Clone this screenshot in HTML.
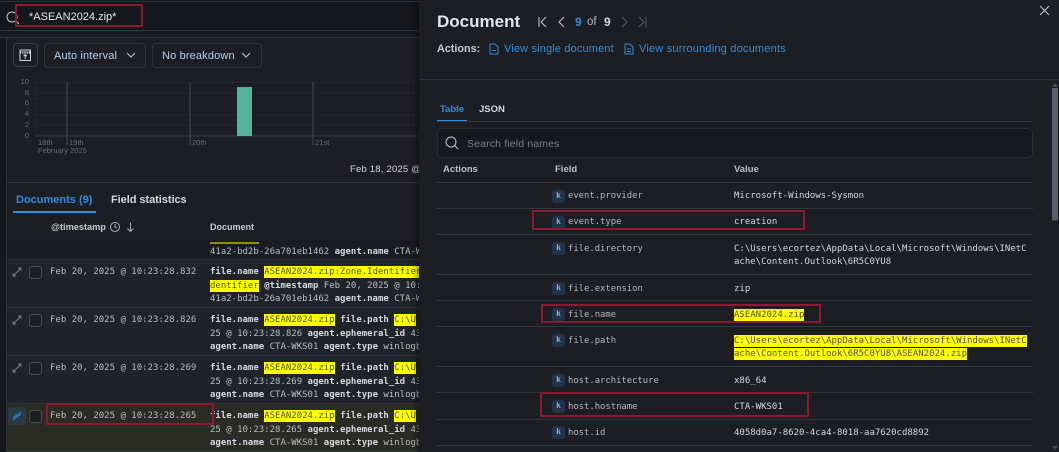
<!DOCTYPE html>
<html><head><meta charset="utf-8">
<style>
html,body{margin:0;padding:0;background:#1d1e24}
#p{position:relative;width:1059px;height:452px;overflow:hidden;background:#1d1e24;font-family:"Liberation Sans",sans-serif;color:#dfe5ef}
#p div,#p span.a,#p svg{position:absolute}
.t{white-space:nowrap;line-height:14px}
.m{font-family:"DejaVu Sans Mono",monospace;font-size:9px;white-space:nowrap;line-height:13px;color:#b9bec6}
.m b{color:#d5d8de;font-weight:bold}
.h{background:#ffff00;color:#55552a;padding:1px 0}
.red{border:2px solid #8c1a32;border-radius:1px;box-sizing:border-box}
.k{width:13px;height:13px;background:#22344a;border-radius:3px;color:#8db4d8;font:bold 8px/13px "Liberation Mono",monospace;text-align:center}
.f{font-family:"DejaVu Sans Mono",monospace;font-size:8.9px;color:#b4b9c1;line-height:13px;white-space:nowrap;margin-top:1px}
.v{font-family:"DejaVu Sans Mono",monospace;font-size:9px;color:#d5d8de;line-height:13.4px;white-space:nowrap;margin-top:1px}
.sep{left:437px;width:596px;height:1px;background:#343741}
.row{left:7px;width:413px;height:47px;background:#21222b;overflow:hidden}
.line{height:1px;background:#32343d}
.cb{width:11px;height:11px;border:1px solid #4a4d57;border-radius:3px;background:#1d1e24;left:29px}
</style></head><body><div id="p">

<!-- left: top bar -->
<div style="left:0;top:0;width:420px;height:30px;background:#16171c"></div>
<div class="line" style="left:0;top:1px;width:420px"></div>
<div class="line" style="left:0;top:30px;width:420px"></div>
<div style="left:0;top:31px;width:420px;height:6px;background:#1a1b20"></div>
<div class="line" style="left:0;top:37px;width:420px"></div>
<div style="left:0;top:38px;width:6px;height:414px;background:#16171c"></div>
<div style="left:6px;top:38px;width:1px;height:414px;background:#30323a"></div>

<svg style="left:6px;top:11px" width="14" height="14" viewBox="0 0 14 14" fill="none" stroke="#c6cbd3" stroke-width="1"><circle cx="6" cy="6" r="5"/><path d="M10 10l3 3"/></svg>
<div class="t" style="left:29px;top:10px;font-size:11px;color:#e6e9ee">*ASEAN2024.zip*</div>
<div class="red" style="left:15px;top:4px;width:128px;height:23px;border-radius:2px"></div>

<!-- chart toolbar -->
<div style="left:13px;top:43px;width:25px;height:24px;border:1px solid #3a3c45;border-radius:4px;box-sizing:border-box"></div>
<svg style="left:19px;top:49px" width="13" height="13" viewBox="0 0 13 13" fill="none" stroke="#d5d8de" stroke-width="1"><rect x="1" y="1" width="10.5" height="10.5"/><path d="M1 3.5h10.5" stroke-width="2.4" stroke-dasharray="1 .8"/><path d="M6.2 10V6M4.6 7.2l1.6-1.6 1.6 1.6"/></svg>
<div style="left:44px;top:43px;width:102px;height:25px;border:1px solid #32343d;border-radius:4px;box-sizing:border-box"></div>
<div class="t" style="left:54px;top:49px;font-size:11px;color:#b5d0ee;letter-spacing:.15px">Auto interval</div>
<svg style="left:126px;top:52px" width="10" height="7" viewBox="0 0 10 7" fill="none" stroke="#c6cbd3"><path d="M1 1l4 4 4-4"/></svg>
<div style="left:152px;top:43px;width:110px;height:25px;border:1px solid #32343d;border-radius:4px;box-sizing:border-box"></div>
<div class="t" style="left:162px;top:49px;font-size:11px;color:#b5d0ee;letter-spacing:.15px">No breakdown</div>
<svg style="left:241px;top:52px" width="10" height="7" viewBox="0 0 10 7" fill="none" stroke="#c6cbd3"><path d="M1 1l4 4 4-4"/></svg>

<!-- chart -->
<svg style="left:0;top:75px" width="420" height="80" viewBox="0 0 420 80">
<g stroke="#2b2d34" stroke-dasharray="2 2"><path d="M36 7h384M36 18h384M36 29h384M36 40h384M36 50h384"/></g>
<path d="M36 61h384" stroke="#383a43"/>
<path d="M36 7v54" stroke="#2b2d34" stroke-dasharray="2 2"/>
<g stroke="#3f4149" stroke-width="1.3"><path d="M67 7v63M190 7v63M313 7v63"/></g>
<rect x="237" y="12" width="15" height="49" fill="#54b399"/>
<g font-family="Liberation Sans" font-size="7.5" fill="#6b6e76" text-anchor="end">
<text x="29" y="9">10</text><text x="29" y="20">8</text><text x="29" y="30">6</text><text x="29" y="41">4</text><text x="29" y="52">2</text><text x="29" y="63">0</text></g>
<g font-family="Liberation Sans" font-size="7.5" fill="#6b6e76">
<text x="38" y="70">18th</text><text x="69" y="70">19th</text><text x="192" y="70">20th</text><text x="315" y="70">21st</text><text x="38" y="78">February 2025</text></g>
</svg>
<div class="t" style="left:350px;top:163px;font-size:9.5px;color:#d5d8de;letter-spacing:.2px">Feb 18, 2025 @ 1</div>
<div class="line" style="left:7px;top:182px;width:413px"></div>

<!-- tabs -->
<div class="t" style="left:16px;top:193px;font-size:11px;font-weight:bold;color:#2f8fdc">Documents (9)</div>
<div class="t" style="left:111px;top:193px;font-size:11px;font-weight:bold;color:#d5d8de;letter-spacing:-.05px">Field statistics</div>
<div style="left:13px;top:211px;width:83px;height:2px;background:#2f8fdc"></div>

<!-- table header -->
<div class="t" style="left:51px;top:220px;font-size:9.2px;font-weight:bold;color:#c6cbd3">@timestamp</div>
<svg style="left:109px;top:221px" width="28" height="12" viewBox="0 0 28 12" fill="none" stroke="#a9adb5"><circle cx="6" cy="6" r="4.5"/><path d="M6 3v3l2 1M21.500 1.500v9M18.500 7.500l3 3 3-3"/></svg>
<div class="t" style="left:210px;top:220px;font-size:9px;font-weight:bold;color:#c6cbd3">Document</div>
<div style="left:7px;top:241px;width:413px;height:1px;background:#17181d"></div>

<!-- partial row -->
<div style="left:7px;top:242px;width:413px;height:17px;background:#1b1c22;overflow:hidden"></div>
<div style="left:210px;top:242px;width:49px;height:2px;background:#8f8f14"></div>
<div class="m" style="left:210px;top:246px"><span>41a2-bd2b-26a701eb1462</span> <b>agent.name</b> CTA-W</div>

<!-- rows -->
<div class="row" style="top:260px"></div>
<div class="line" style="left:7px;top:259px;width:413px"></div>
<div class="line" style="left:7px;top:307px;width:413px"></div>
<div class="row" style="top:308px"></div>
<div class="line" style="left:7px;top:355px;width:413px"></div>
<div class="row" style="top:356px"></div>
<div class="line" style="left:7px;top:403px;width:413px"></div>
<div class="row" style="top:404px;background:#2a2b24"></div>
<div class="line" style="left:7px;top:451px;width:413px"></div>

<!-- expand icons -->
<svg style="left:12px;top:267px" width="10" height="10" viewBox="0 0 10 10" fill="none" stroke="#7d8088" stroke-width=".9"><path d="M1 9L9 1M6 1h3v3M1 6v3h3"/></svg>
<svg style="left:12px;top:315px" width="10" height="10" viewBox="0 0 10 10" fill="none" stroke="#7d8088" stroke-width=".9"><path d="M1 9L9 1M6 1h3v3M1 6v3h3"/></svg>
<svg style="left:12px;top:363px" width="10" height="10" viewBox="0 0 10 10" fill="none" stroke="#7d8088" stroke-width=".9"><path d="M1 9L9 1M6 1h3v3M1 6v3h3"/></svg>
<div style="left:8px;top:407px;width:18px;height:18px;background:#2a3b45;border-radius:3px"></div>
<svg style="left:12px;top:411px" width="10" height="10" viewBox="0 0 10 10" fill="none" stroke="#2f8fdc" stroke-width="1"><path d="M1 9L9 1M4 3v3H1M6 7V4h3"/></svg>

<div class="cb" style="top:266px"></div>
<div class="cb" style="top:314px"></div>
<div class="cb" style="top:362px"></div>
<div class="cb" style="top:410px;background:#1d1e24"></div>

<div class="m" style="left:50px;top:266px">Feb 20, 2025 @ 10:23:28.832</div>
<div class="m" style="left:50px;top:314px">Feb 20, 2025 @ 10:23:28.826</div>
<div class="m" style="left:50px;top:362px">Feb 20, 2025 @ 10:23:28.269</div>
<div class="m" style="left:50px;top:410px">Feb 20, 2025 @ 10:23:28.265</div>

<div class="m" style="left:210px;top:266px"><b>file.name</b> <span class="h">ASEAN2024.zip:Zone.Identifier</span></div>
<div class="m" style="left:210px;top:280px"><span class="h">dentifier</span> <b>@timestamp</b> Feb 20, 2025 @ 10:</div>
<div class="m" style="left:210px;top:293px">41a2-bd2b-26a701eb1462 <b>agent.name</b> CTA-W</div>

<div class="m" style="left:210px;top:314px"><b>file.name</b> <span class="h">ASEAN2024.zip</span> <b>file.path</b> <span class="h">C:\U</span></div>
<div class="m" style="left:210px;top:328px">25 @ 10:23:28.826 <b>agent.ephemeral_id</b> 43</div>
<div class="m" style="left:210px;top:341px"><b>agent.name</b> CTA-WKS01 <b>agent.type</b> winlogb</div>

<div class="m" style="left:210px;top:362px"><b>file.name</b> <span class="h">ASEAN2024.zip</span> <b>file.path</b> <span class="h">C:\U</span></div>
<div class="m" style="left:210px;top:376px">25 @ 10:23:28.269 <b>agent.ephemeral_id</b> 43</div>
<div class="m" style="left:210px;top:389px"><b>agent.name</b> CTA-WKS01 <b>agent.type</b> winlogb</div>

<div class="m" style="left:210px;top:410px"><b>file.name</b> <span class="h">ASEAN2024.zip</span> <b>file.path</b> <span class="h">C:\U</span></div>
<div class="m" style="left:210px;top:424px">25 @ 10:23:28.265 <b>agent.ephemeral_id</b> 43</div>
<div class="m" style="left:210px;top:437px"><b>agent.name</b> CTA-WKS01 <b>agent.type</b> winlogb</div>

<div class="red" style="left:46px;top:403px;width:168px;height:22px"></div>

<!-- right panel -->
<div style="left:419px;top:0;width:640px;height:452px;background:#1d1e24;box-shadow:-3px 0 5px rgba(0,0,0,.35)"></div>
<div class="t" style="left:437px;top:15px;font-size:17px;font-weight:bold;color:#dfe5ef">Document</div>
<svg style="left:537px;top:15px" width="110" height="14" viewBox="0 0 110 14" fill="none" stroke="#c6cbd3" stroke-width="1">
<path d="M2 2v10M9 2L4 7l5 5M27 2l-5 5 5 5"/>
<path d="M85 2l5 5-5 5M102 2l5 5-5 5M109 2v10" stroke="#5a5d66"/></svg>
<div class="t" style="left:575px;top:15px;font-size:12px;font-weight:bold;color:#2f8fdc">9</div>
<div class="t" style="left:587px;top:15px;font-size:11.5px;color:#b5bac2">of</div>
<div class="t" style="left:604px;top:15px;font-size:12px;font-weight:bold;color:#d5d8de">9</div>
<div class="t" style="left:437px;top:42px;font-size:10.8px;font-weight:bold;color:#c6cbd3">Actions:</div>
<svg style="left:489px;top:43px" width="10" height="12" viewBox="0 0 10 12" fill="none" stroke="#2f8fdc"><path d="M1 1h5l3 3v7H1zM3 7.500h4"/></svg>
<div class="t" style="left:504px;top:42px;font-size:11px;color:#2f8fdc;letter-spacing:.15px">View single document</div>
<svg style="left:624px;top:43px" width="10" height="12" viewBox="0 0 10 12" fill="none" stroke="#2f8fdc"><path d="M1 1h5l3 3v7H1zM3 6h4M3 8.500h4"/></svg>
<div class="t" style="left:639px;top:42px;font-size:11px;color:#2f8fdc;letter-spacing:.2px">View surrounding documents</div>
<svg style="left:1038px;top:4px" width="13" height="13" viewBox="0 0 13 13" stroke="#c6cbd3"><path d="M2 2l9 9M11 2l-9 9"/></svg>
<div class="line" style="left:420px;top:79px;width:639px"></div>

<!-- inner tabs -->
<div class="t" style="left:440px;top:103px;font-size:9.5px;font-weight:bold;color:#2f8fdc">Table</div>
<div class="t" style="left:479px;top:103px;font-size:9.5px;font-weight:bold;color:#d5d8de">JSON</div>
<div style="left:437px;top:120px;width:30px;height:2px;background:#2f8fdc"></div>
<div class="sep" style="top:121px"></div>

<div style="left:437px;top:128px;width:596px;height:30px;background:#17181d;border:1px solid #2a2c33;border-radius:5px;box-sizing:border-box"></div>
<svg style="left:445px;top:136px" width="14" height="14" viewBox="0 0 14 14" fill="none" stroke="#c6cbd3"><circle cx="6" cy="6" r="5"/><path d="M10 10l3 3"/></svg>
<div class="t" style="left:467px;top:137px;font-size:10.5px;color:#7d8088;letter-spacing:.15px">Search field names</div>

<div class="t" style="left:443px;top:163px;font-size:9.5px;font-weight:bold;color:#b9c0cb">Actions</div>
<div class="t" style="left:555px;top:163px;font-size:9.5px;font-weight:bold;color:#b9c0cb">Field</div>
<div class="t" style="left:734px;top:163px;font-size:9.5px;font-weight:bold;color:#b9c0cb">Value</div>
<div class="sep" style="top:182px"></div>

<div class="k" style="left:552px;top:190px">k</div><div class="f" style="left:568px;top:189px">event.provider</div>
<div class="v" style="left:734px;top:189px">Microsoft-Windows-Sysmon</div>
<div class="sep" style="top:208px"></div>

<div class="k" style="left:552px;top:216px">k</div><div class="f" style="left:568px;top:215px">event.type</div>
<div class="v" style="left:734px;top:215px">creation</div>
<div class="sep" style="top:234px"></div>

<div class="k" style="left:552px;top:242px">k</div><div class="f" style="left:568px;top:242px">file.directory</div>
<div class="v" style="left:734px;top:242px">C:\Users\ecortez\AppData\Local\Microsoft\Windows\INetC<br>ache\Content.Outlook\6R5C0YU8</div>
<div class="sep" style="top:274px"></div>

<div class="k" style="left:552px;top:282px">k</div><div class="f" style="left:568px;top:282px">file.extension</div>
<div class="v" style="left:734px;top:282px">zip</div>
<div class="sep" style="top:300px"></div>

<div class="k" style="left:552px;top:308px">k</div><div class="f" style="left:568px;top:308px">file.name</div>
<div class="v" style="left:734px;top:308px"><span class="h">ASEAN2024.zip</span></div>
<div class="sep" style="top:326px"></div>

<div class="k" style="left:552px;top:334px">k</div><div class="f" style="left:568px;top:334px">file.path</div>
<div class="v" style="left:734px;top:334px"><span class="h">C:\Users\ecortez\AppData\Local\Microsoft\Windows\INetC</span><br><span class="h">ache\Content.Outlook\6R5C0YU8\ASEAN2024.zip</span></div>
<div class="sep" style="top:366px"></div>

<div class="k" style="left:552px;top:374px">k</div><div class="f" style="left:568px;top:374px">host.architecture</div>
<div class="v" style="left:734px;top:374px">x86_64</div>
<div class="sep" style="top:392px"></div>

<div class="k" style="left:552px;top:400px">k</div><div class="f" style="left:568px;top:400px">host.hostname</div>
<div class="v" style="left:734px;top:400px">CTA-WKS01</div>
<div class="sep" style="top:419px"></div>

<div class="k" style="left:552px;top:426px">k</div><div class="f" style="left:568px;top:426px">host.id</div>
<div class="v" style="left:734px;top:426px">4058d0a7-8620-4ca4-8018-aa7620cd8892</div>
<div class="sep" style="top:445px"></div>

<!-- red boxes -->
<div class="red" style="left:532px;top:210px;width:273px;height:20px"></div>
<div class="red" style="left:541px;top:304px;width:280px;height:19px"></div>
<div class="red" style="left:540px;top:392px;width:269px;height:25px"></div>

<!-- scrollbar -->
<div style="left:1052px;top:88px;width:6px;height:132px;background:#5a5e6b"></div>
<div style="left:1052px;top:220px;width:6px;height:1px;background:#34363f"></div>
<svg style="left:1052px;top:83px" width="6" height="4"><path d="M3 0l3 4H0z" fill="#4a4d57"/></svg>
<svg style="left:1052px;top:446px" width="6" height="4"><path d="M3 4l3-4H0z" fill="#4a4d57"/></svg>
</div></body></html>
